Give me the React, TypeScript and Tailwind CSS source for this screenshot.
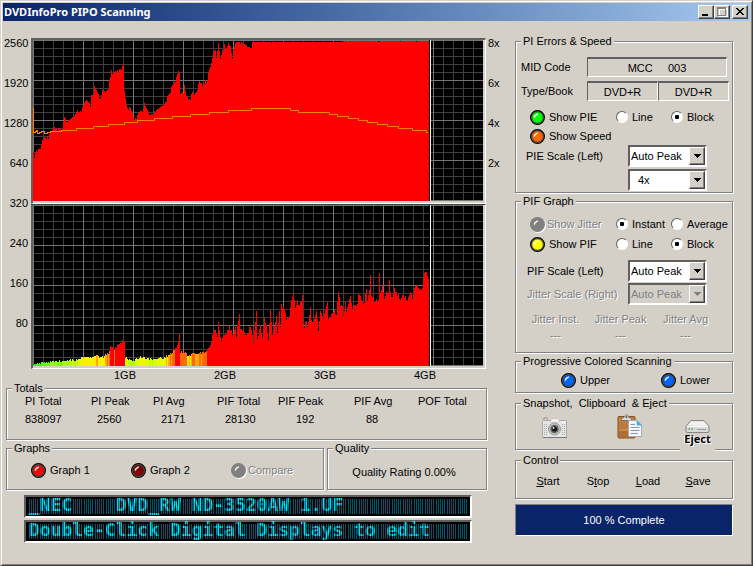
import { useState, type ReactNode } from 'react'
import { clsx } from 'clsx'

type Point = [number, number]

// top edge of the PI graph, in graph pixels from the top
const PI_EDGE: Point[] = [
  [0, 111], [1, 114], [3, 110], [7, 108], [8, 103], [10, 97], [15, 95], [18, 91], [21, 87], [27, 89], [28, 92],
  [30, 82], [31, 77], [34, 81], [38, 78], [41, 76], [44, 70], [46, 73], [50, 63], [53, 60], [57, 64], [58, 55],
  [60, 55], [61, 46], [64, 52], [67, 59], [69, 50], [72, 52], [75, 49], [76, 40], [78, 30], [80, 33], [83, 30],
  [87, 29], [90, 24], [91, 50], [93, 63], [95, 66], [97, 68], [99, 73], [101, 81], [103, 75], [106, 72],
  [110, 69], [111, 63], [114, 70], [116, 75], [120, 72], [123, 70], [127, 67], [130, 65], [132, 62], [134, 56],
  [137, 53], [138, 47], [141, 42], [143, 36], [145, 31], [146, 33], [147, 53], [150, 52], [151, 45], [153, 56],
  [156, 59], [159, 52], [161, 55], [164, 50], [166, 38], [169, 46], [171, 40], [174, 40], [175, 32], [177, 26],
  [178, 23], [180, 12], [182, 10], [183, 18], [185, 3], [187, 19], [189, 10], [191, 4], [193, 8], [195, 3],
  [197, 6], [199, 19], [200, 6], [201, 3], [204, 2], [209, 2], [213, 5], [216, 7], [218, 8], [219, 2], [396, 1],
]

// bar heights of the PIF graph
const PIF_BARS: Point[] = [
  [0, 1], [3, 3], [10, 3], [17, 4], [20, 5], [30, 5], [35, 6], [45, 6], [48, 8], [55, 8], [60, 10], [63, 10],
  [70, 9], [75, 13], [77, 19], [81, 17], [85, 22], [90, 25], [91, 24], [92, 8], [100, 6], [108, 9], [115, 7],
  [125, 7], [130, 8], [138, 12], [140, 15], [143, 19], [145, 23], [146, 32], [147, 14], [150, 15], [155, 10],
  [160, 12], [165, 13], [170, 13], [173, 15], [176, 19], [178, 26], [181, 36], [184, 31], [185, 42], [188, 25],
  [191, 30], [196, 38], [199, 32], [202, 38], [203, 27], [204, 42], [206, 51], [207, 36], [210, 37], [213, 29],
  [217, 41], [220, 25], [223, 55], [224, 27], [227, 41], [229, 27], [231, 48], [233, 40], [235, 28], [237, 55],
  [239, 30], [243, 50], [244, 33], [246, 55], [247, 39], [248, 61], [251, 57], [253, 46], [256, 51], [258, 67],
  [260, 72], [262, 60], [264, 65], [266, 60], [269, 69], [270, 37], [273, 45], [274, 38], [277, 57], [278, 46],
  [280, 43], [283, 55], [285, 36], [287, 55], [290, 47], [294, 65], [295, 48], [298, 52], [300, 56], [303, 53],
  [305, 72], [307, 62], [309, 60], [310, 50], [312, 63], [313, 53], [317, 72], [319, 57], [321, 60], [324, 60],
  [325, 72], [327, 68], [331, 62], [333, 78], [334, 64], [336, 76], [337, 92], [338, 69], [342, 65], [345, 66],
  [346, 94], [347, 73], [349, 79], [351, 67], [353, 72], [355, 71], [356, 86], [357, 74], [359, 68], [361, 77],
  [363, 74], [367, 67], [369, 71], [372, 68], [374, 65], [377, 74], [379, 67], [381, 78], [384, 82], [387, 75],
  [389, 76], [390, 90], [392, 96], [394, 91], [395, 88],
]

const SAMPLES = 396
const SPEED =
  'M0.5 68V92.5H2V91.5H3V90.5H4V93.5H6V92.5H8V91.5H11V93.5H14V92.5H17V91.5H28V90.5H43V88.5H60V86.5H75V84.5H91V82.5H104V80.5H121V78.5H139V76.5H157V74.5H176V72.5H195V70.5H218V68.5H257V70.5H265V72.5H296V74.5H304V76.5H315V78.5H325V80.5H334V82.5H344V84.5H354V86.5H365V88.5H379V90.5H393V92.5H395'

function sample(points: Point[], x: number) {
  const i = points.findIndex((p) => p[0] >= x)
  if (i < 0) return points[points.length - 1][1]
  if (i === 0) return points[0][1]
  const [x0, y0] = points[i - 1]
  const [x1, y1] = points[i]
  return y0 + ((y1 - y0) * (x - x0)) / (x1 - x0)
}

// repeatable noise between 0 and 1
function noise(n: number) {
  const v = Math.sin(n * 127.1 + 11.7) * 43758.5453
  return v - Math.floor(v)
}

const piPath =
  'M0 161' +
  Array.from({ length: SAMPLES }, (_, x) => {
    const swing = x < 219 ? (noise(x) > 0.65 ? 4 : 0) : noise(x) > 0.9 ? 1 : 0
    return `V${Math.round(sample(PI_EDGE, x) + swing * noise(x + 9))}H${x + 1}`
  }).join('') +
  'V161Z'

const pifBars = Array.from({ length: SAMPLES }, (_, x) => {
  const base = sample(PIF_BARS, x)
  const swing = x < 176 ? 3 : 4
  return Math.max(1, Math.round(base + (noise(x + 40) - 0.5) * Math.min(swing, base * 0.6)))
})

function barColor(h: number, x: number) {
  if (x > 174 || h >= 17) return '#ff0000'
  if (h <= 2) return '#22ee22'
  if (h <= 4) return '#66ff00'
  if (h <= 6) return '#aaff00'
  if (h <= 8) return '#ddff00'
  if (h <= 10) return '#ffee00'
  if (h <= 12) return '#ffaa00'
  return '#ff6a00'
}

const columns = Array.from({ length: 45 }, (_, i) => i)
const rows = Array.from({ length: 21 }, (_, i) => i)

function Graph({ label, children }: { label: string; children: ReactNode }) {
  return (
    <svg
      viewBox="0 0 450 161"
      preserveAspectRatio="none"
      shapeRendering="crispEdges"
      role="img"
      aria-label={label}
      className="block h-[161px] w-full bg-black"
    >
      {columns.map((i) => i % 5 !== 0 && <rect key={i} x={i * 10} y="0" width="1" height="161" fill="#404040" />)}
      {rows.map((i) => i % 5 !== 0 && <rect key={i} x="0" y={i * 8} width="450" height="1" fill="#404040" />)}
      {columns.map((i) => i % 5 === 0 && <rect key={i} x={i * 10} y="0" width="1" height="161" fill="#757575" />)}
      {rows.map((i) => i % 5 === 0 && <rect key={i} x="0" y={i * 8} width="450" height="1" fill="#757575" />)}
      {children}
      <rect x="396" y="0" width="1" height="161" fill="#000" />
      <rect x="397" y="0" width="1" height="161" fill="#fff" />
    </svg>
  )
}

function Group({ title, className, children }: { title: string; className?: string; children: ReactNode }) {
  return (
    <fieldset
      className={clsx(
        'min-w-0 border border-[#808080] shadow-[1px_1px_0_#fff,inset_1px_1px_0_#fff]',
        className,
      )}
    >
      <legend className="ml-[5px] bg-[#d4d0c8] px-[2px] leading-[14px] whitespace-pre">{title}</legend>
      {children}
    </fieldset>
  )
}

function Led({ color, label, disabled }: { color: string; label: string; disabled?: boolean }) {
  const [on, setOn] = useState(true)
  return (
    <button
      type="button"
      aria-pressed={on}
      disabled={disabled}
      onClick={() => setOn(!on)}
      className={clsx(
        'flex items-center whitespace-nowrap',
        disabled ? 'gap-[2px] text-[#808080] [text-shadow:1px_1px_0_#fff]' : 'gap-1',
      )}
    >
      <svg width="15" height="15" viewBox="0 0 15 15" className="shrink-0 overflow-visible">
        {disabled ? (
          <>
            <circle cx="8.5" cy="8.5" r="7.5" fill="#fff" />
            <circle cx="7.5" cy="7.5" r="7.5" fill="#808080" />
          </>
        ) : (
          <>
            <circle cx="7.5" cy="7.5" r="6.9" fill="#808080" stroke="#000" strokeWidth="1.2" />
            <circle cx="7.5" cy="7.5" r="5.6" fill={color} stroke="#222" strokeWidth="0.6" />
          </>
        )}
        <path d="M4.2 7.6L5 5.8L7.8 3.8" fill="none" stroke="#fff" strokeWidth="1.4" />
      </svg>
      {label}
    </button>
  )
}

function Radio({ name, label, checked }: { name: string; label: string; checked?: boolean }) {
  return (
    <label className="flex items-center gap-1 whitespace-nowrap">
      <input
        type="radio"
        name={name}
        defaultChecked={checked}
        className="size-3 shrink-0 appearance-none rounded-full border border-t-[#606060] border-r-white border-b-white border-l-[#606060] bg-white checked:bg-[radial-gradient(circle,#000_2px,#fff_2.5px)]"
      />
      {label}
    </label>
  )
}

function Select({ label, value, indent, disabled }: { label: string; value: string; indent?: boolean; disabled?: boolean }) {
  return (
    <div className="relative h-[22px] w-[79px]">
      <select
        aria-label={label}
        disabled={disabled}
        className={clsx(
          'h-full w-full appearance-none border-2 border-t-[#606060] border-r-white border-b-white border-l-[#606060] pb-px opacity-100',
          indent ? 'pl-2' : 'pl-px',
          disabled ? 'bg-[#d4d0c8] text-[#808080]' : 'bg-white',
        )}
      >
        <option>{value}</option>
      </select>
      <span className="pointer-events-none absolute top-[2px] right-[2px] flex h-[18px] w-4 items-center justify-center border border-t-white border-r-[#404040] border-b-[#404040] border-l-white bg-[#d4d0c8] shadow-[inset_-1px_-1px_0_#808080]">
        <svg width="7" height="4" viewBox="0 0 7 4" shapeRendering="crispEdges">
          <path d="M0 0H7V1H6V2H5V3H4V4H3V3H2V2H1V1H0Z" fill={disabled ? '#808080' : '#000'} />
        </svg>
      </span>
    </div>
  )
}

function Readout({ value, className }: { value: string; className: string }) {
  return (
    <output
      className={clsx(
        'flex h-5 items-center justify-center border border-t-2 border-t-[#606060] border-r-white border-b-white border-l-[#606060] whitespace-pre',
        className,
      )}
    >
      {value}
    </output>
  )
}

// dot matrix line: lit columns behind the text, dark gaps over it
function Display({ text }: { text: string }) {
  return (
    <div className="relative h-[23px] border-2 border-t-[#606060] border-r-white border-b-white border-l-[#606060] bg-black p-[2px_3px]">
      <p className="h-[15px] bg-[repeating-linear-gradient(90deg,#00566a_0_1px,#000_1px_2px,#00566a_2px_3px,#000_3px_4px,#00566a_4px_5px,#000_5px_6px,#00566a_6px_7px,#000_7px_8px,#00566a_8px_9px,#000_9px_11px)] font-['DejaVu_Sans_Mono',monospace] text-[18px] leading-[11px] font-bold whitespace-pre text-[#00e4ff]">
        {text}
      </p>
      <span className="pointer-events-none absolute inset-x-[3px] inset-y-0 bg-[repeating-linear-gradient(90deg,transparent_0_1px,#00000088_1px_2px,transparent_2px_3px,#00000088_3px_4px,transparent_4px_5px,#00000088_5px_6px,transparent_6px_7px,#00000088_7px_8px,transparent_8px_9px,#00000088_9px_11px)]" />
    </div>
  )
}

function CaptionButton({ label, className, children }: { label: string; className?: string; children: ReactNode }) {
  return (
    <button
      type="button"
      aria-label={label}
      className={clsx(
        'h-[14px] w-4 border border-t-white border-r-[#404040] border-b-[#404040] border-l-white bg-[#d4d0c8] shadow-[inset_-1px_-1px_0_#808080]',
        className,
      )}
    >
      <svg width="14" height="12" viewBox="0 0 14 12" shapeRendering="crispEdges" className="block">
        {children}
      </svg>
    </button>
  )
}

function CameraIcon() {
  return (
    <svg width="26" height="22" viewBox="0 0 26 22">
      <path d="M2 3V1H5V3" fill="#eee" stroke="#888" />
      <rect x="0.5" y="3.5" width="24" height="17" rx="1" fill="#e6e6e6" stroke="#a8a8a8" />
      <path d="M1 20.5H25" stroke="#777" />
      <path d="M2.5 7V19M4.5 7V19M20.5 7V19M22.5 7V19" stroke="#aaa" strokeDasharray="1 1" />
      <rect x="9" y="2" width="8" height="3" fill="#f8f8f8" stroke="#bbb" strokeWidth="0.5" />
      <circle cx="12.5" cy="12" r="6" fill="#c4c4c4" stroke="#999" />
      <circle cx="12.5" cy="12" r="4.3" fill="#666" />
      <circle cx="12.5" cy="12" r="2.6" fill="#161616" />
      <circle cx="11.5" cy="11" r="1" fill="#ddd" />
      <rect x="20" y="4.5" width="3" height="1.5" fill="#fff" />
    </svg>
  )
}

function ClipboardIcon() {
  return (
    <svg width="26" height="25" viewBox="0 0 26 25">
      <rect x="1" y="2.5" width="17" height="21.5" rx="1" fill="#bd7a3c" stroke="#865020" />
      <path d="M2 6H17M2 16H11" stroke="#d29a60" />
      <path d="M2 18H11M2 20H11M2 22H14" stroke="#a3632b" />
      <path d="M4 6.5C4 4 7 4.5 7.5 2.5C8 0.5 11 0.5 11.5 2.5C12 4.5 15 4 15 6.5Z" fill="#d8d8d8" stroke="#777" />
      <circle cx="9.5" cy="3" r="1" fill="#555" />
      <path d="M11.5 6.5H20L24.5 11V22.5H11.5Z" fill="#f4f8fc" stroke="#a0acb8" />
      <path d="M19.5 6L25 11.5H20Z" fill="#38a8e8" />
      <path d="M13.5 10.5H18M13.5 13.5H22.5M13.5 16.5H22.5M13.5 19.5H21" stroke="#8898a8" />
    </svg>
  )
}

function DriveIcon() {
  return (
    <svg width="25" height="13" viewBox="0 0 25 13">
      <path d="M1 6L6 0.5H19L24 6V11.5C24 12 23.5 12.5 23 12.5H2C1.5 12.5 1 12 1 11.5Z" fill="#d8d8d8" stroke="#888" />
      <path d="M6.5 1.5H18.5L22.5 5.5H2.5Z" fill="#f2f2f2" />
      <path d="M2 6.5H23" stroke="#fff" />
      <path d="M12 9.5H21" stroke="#999" />
      <path d="M3.5 9H5M6.5 9H8" stroke="#42a442" strokeWidth="1.5" />
    </svg>
  )
}

const TOTALS = [
  { head: 'PI Total', value: '838097', col: 'w-[66px]', pad: 'pl-0' },
  { head: 'PI Peak', value: '2560', col: 'w-[62px]', pad: 'pl-[6px]' },
  { head: 'PI Avg', value: '2171', col: 'w-[64px]', pad: 'pl-2' },
  { head: 'PIF Total', value: '28130', col: 'w-[61px]', pad: 'pl-2' },
  { head: 'PIF Peak', value: '192', col: 'w-[76px]', pad: 'pl-[18px]' },
  { head: 'PIF Avg', value: '88', col: 'w-[64px]', pad: 'pl-3' },
  { head: 'POF Total', value: '', col: '', pad: 'pl-0' },
]

const JITTER = ['Jitter Inst.', 'Jitter Peak', 'Jitter Avg']

const CONTROLS = [
  ['', 'S', 'tart'],
  ['S', 't', 'op'],
  ['', 'L', 'oad'],
  ['', 'S', 'ave'],
]

export default function App() {
  return (
    <main className="min-h-screen border border-t-[#d4d0c8] border-r-[#404040] border-b-[#404040] border-l-[#d4d0c8] bg-[#d4d0c8] font-['Liberation_Sans',Arial,sans-serif] text-[11px] leading-[14px] text-black shadow-[inset_1px_1px_0_#fff,inset_-1px_-1px_0_#808080]">
      <div className="p-[2px]">
        <header className="flex h-[18px] items-center bg-linear-to-r from-[#0a246a] to-[#a6caf0] pr-[2px] pl-px">
          <h1 className="flex-1 font-['Noto_Sans',sans-serif] text-[11px] font-bold text-white">DVDInfoPro PIPO Scanning</h1>
          <CaptionButton label="Minimize">
            <rect x="3" y="8" width="6" height="2" />
          </CaptionButton>
          <CaptionButton label="Maximize">
            <path d="M3 1.5H12M3.5 2V10M11.5 2V10M3 9.5H12M3 2.5H12" fill="none" stroke="#fff" transform="translate(1 1)" />
            <path d="M2 1.5H11M2.5 2V9M10.5 2V9M2 9.5H11M2 2.5H11" fill="none" stroke="#808080" />
          </CaptionButton>
          <CaptionButton label="Close" className="ml-[2px]">
            <path d="M3 2H5V3H6V4H8V3H9V2H11V3H10V4H9V5H8V6H9V7H10V8H11V9H9V8H8V7H6V8H5V9H3V8H4V7H5V6H6V5H5V4H4V3H3Z" />
          </CaptionButton>
        </header>

        <div className="flex gap-3 pr-[17px] pl-px">
          <div className="min-w-0 flex-1">
            <div className="flex">
              <div className="mr-[3px] w-6 pt-[2px] text-right">
                {[2560, 1920, 1280, 640, 320, 240, 160, 80].map((n) => (
                  <div key={n} className="h-10 leading-10">{n}</div>
                ))}
              </div>
              <div className="min-w-0 flex-1 pt-[17px]">
                <div className="border-t-2 border-r border-b border-l-2 border-t-[#606060] border-r-white border-b-white border-l-[#606060] pr-[2px] pb-[2px]">
                  <Graph label="PI errors and speed">
                    <path d={piPath} fill="#ff0000" />
                    <path d={SPEED} fill="none" stroke="#ff8000" strokeWidth="1" />
                  </Graph>
                </div>
                <div className="border-t border-r border-b border-l-2 border-t-[#404040] border-r-white border-b-white border-l-[#606060] pr-[2px] pb-[2px]">
                  <Graph label="PIF errors">
                    {pifBars.map((h, x) => (
                      <rect key={x} x={x} y={161 - h} width="1" height={h} fill={barColor(h, x)} />
                    ))}
                  </Graph>
                </div>
                <div className="grid grid-cols-4 pr-[11px] pl-11 text-center leading-3">
                  {['1GB', '2GB', '3GB', '4GB'].map((t) => (
                    <span key={t}>{t}</span>
                  ))}
                </div>
              </div>
              <div className="w-[17px] pt-[2px] pl-[2px]">
                {['8x', '6x', '4x', '2x'].map((t) => (
                  <div key={t} className="h-10 leading-10">{t}</div>
                ))}
              </div>
            </div>

            <div className="mr-4 ml-[2px]">
              <Group title="Totals" className="pb-2">
                <div className="pl-[18px]">
                  <table className="w-full table-fixed text-left whitespace-nowrap">
                    <thead>
                      <tr>
                        {TOTALS.map((t) => (
                          <th key={t.head} className={clsx('p-0 leading-3 font-normal', t.col)}>{t.head}</th>
                        ))}
                      </tr>
                    </thead>
                    <tbody>
                      <tr>
                        {TOTALS.map((t) => (
                          <td key={t.head} className={clsx('leading-6', t.pad)}>{t.value}</td>
                        ))}
                      </tr>
                    </tbody>
                  </table>
                </div>
              </Group>

              <div className="mt-px flex gap-[3px]">
                <Group title="Graphs" className="flex-2 pb-[3px]">
                  <div className="grid h-[30px] grid-cols-[100px_100px_1fr] pl-6">
                    <Led color="#ff0000" label="Graph 1" />
                    <Led color="#800000" label="Graph 2" />
                    <Led color="#808080" label="Compare" disabled />
                  </div>
                </Group>
                <Group title="Quality" className="flex-1">
                  <p className="pr-[6px] text-center leading-[34px]">Quality Rating 0.00%</p>
                </Group>
              </div>

              <div className="mt-[5px] mr-[15px] ml-[18px] flex flex-col gap-[2px]">
                <Display text="_NEC    DVD_RW ND-3520AW 1.UF" />
                <Display text="Double-Click Digital Displays to edit" />
              </div>
            </div>
          </div>

          <aside className="w-[218px] shrink-0 pt-[13px]">
            <Group title="PI Errors & Speed" className="pb-px">
              <div className="mt-[9px] flex items-center pl-[5px]">
                <span className="w-[66px]">MID Code</span>
                <Readout value="MCC     003" className="w-[140px]" />
              </div>
              <div className="mt-1 flex items-center pl-[5px]">
                <span className="w-[66px]">Type/Book</span>
                <Readout value="DVD+R" className="w-[71px]" />
                <Readout value="DVD+R" className="w-[71px]" />
              </div>
              <div className="mt-[7px] grid h-[18px] grid-cols-[86px_55px_1fr] pl-[14px]">
                <Led color="#00ff00" label="Show PIE" />
                <Radio name="pie" label="Line" />
                <Radio name="pie" label="Block" checked />
              </div>
              <div className="mt-px flex h-[18px] pl-[14px]">
                <Led color="#ff6600" label="Show Speed" />
              </div>
              <div className="flex items-center pl-[10px]">
                <span className="w-[102px]">PIE Scale (Left)</span>
                <Select label="PIE Scale (Left)" value="Auto Peak" />
              </div>
              <div className="mt-[2px] pl-28">
                <Select label="Speed scale" value="4x" indent />
              </div>
            </Group>

            <Group title="PIF Graph" className="mt-px pb-[9px]">
              <div className="mt-[6px] grid h-5 grid-cols-[86px_55px_1fr] pl-[14px]">
                <Led color="#808080" label="Show Jitter" disabled />
                <Radio name="pifMode" label="Instant" checked />
                <Radio name="pifMode" label="Average" />
              </div>
              <div className="grid h-5 grid-cols-[86px_55px_1fr] pl-[14px]">
                <Led color="#ffff00" label="Show PIF" />
                <Radio name="pif" label="Line" />
                <Radio name="pif" label="Block" checked />
              </div>
              <div className="mt-[6px] flex items-center pl-[11px]">
                <span className="w-[101px]">PIF Scale (Left)</span>
                <Select label="PIF Scale (Left)" value="Auto Peak" />
              </div>
              <div className="mt-px flex items-center pl-[11px]">
                <span className="w-[101px] text-[#808080] [text-shadow:1px_1px_0_#fff]">Jitter Scale (Right)</span>
                <Select label="Jitter Scale (Right)" value="Auto Peak" disabled />
              </div>
              <dl className="mt-[6px] grid grid-cols-[65px_65px_65px] pl-[7px] text-center leading-4 text-[#808080] [text-shadow:1px_1px_0_#fff]">
                {JITTER.map((t) => (
                  <div key={t}>
                    <dt>{t}</dt>
                    <dd>---</dd>
                  </div>
                ))}
              </dl>
            </Group>

            <Group title="Progressive Colored Scanning" className="mt-px pb-[2px]">
              <div className="mt-[2px] grid h-5 grid-cols-[100px_1fr] pl-[45px]">
                <Led color="#0066ff" label="Upper" />
                <Led color="#0066ff" label="Lower" />
              </div>
            </Group>

            <Group title="Snapshot,  Clipboard  & Eject" className="mt-[3px]">
              <div className="flex h-[39px] justify-between pr-[17px] pl-[26px]">
                <button type="button" aria-label="Snapshot" className="mt-[6px] h-6">
                  <CameraIcon />
                </button>
                <button type="button" aria-label="Clipboard" className="mt-[4px] mr-[-12px] h-6">
                  <ClipboardIcon />
                </button>
                <button type="button" className="relative mb-[-2px] flex w-[35px] flex-col items-center bg-[#d4d0c8] pt-[10px]">
                  <DriveIcon />
                  <span className="font-['Noto_Sans',sans-serif] text-[11px] leading-[11px] font-bold [text-shadow:1px_1px_0_#fff,-1px_0_0_#fff]">Eject</span>
                </button>
              </div>
            </Group>

            <Group title="Control" className="mt-[3px] pb-[3px]">
              <div className="grid h-7 grid-cols-[50px_50px_50px_50px] pl-[7px]">
                {CONTROLS.map(([before, key, after]) => (
                  <button key={key + after} type="button">
                    {before}
                    <u>{key}</u>
                    {after}
                  </button>
                ))}
              </div>
            </Group>

            <div
              role="progressbar"
              aria-valuenow={100}
              className="mt-[5px] flex h-8 items-center justify-center border border-t-[#808080] border-r-white border-b-white border-l-[#808080] bg-[#0a246a] text-white"
            >
              100 % Complete
            </div>
          </aside>
        </div>
      </div>
    </main>
  )
}
